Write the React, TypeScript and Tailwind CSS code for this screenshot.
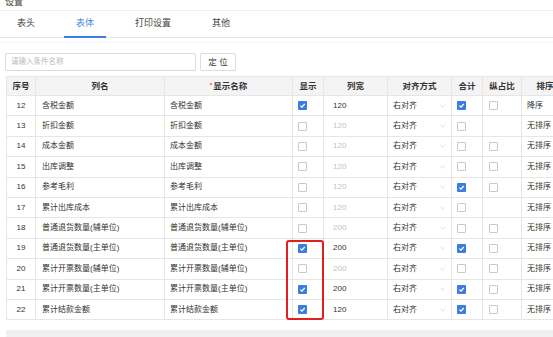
import React from "react";

type Row = {
  no: number;
  name: string;
  show: boolean;
  width: number;
  sum: boolean;
  ratio: boolean | null;
  sort: string;
};

const rows: Row[] = [
  { no: 12, name: "含税金额", show: true, width: 120, sum: true, ratio: false, sort: "降序" },
  { no: 13, name: "折扣金额", show: false, width: 120, sum: false, ratio: null, sort: "无排序" },
  { no: 14, name: "成本金额", show: false, width: 120, sum: false, ratio: false, sort: "无排序" },
  { no: 15, name: "出库调整", show: false, width: 120, sum: false, ratio: false, sort: "无排序" },
  { no: 16, name: "参考毛利", show: false, width: 120, sum: true, ratio: false, sort: "无排序" },
  { no: 17, name: "累计出库成本", show: false, width: 120, sum: false, ratio: null, sort: "无排序" },
  { no: 18, name: "普通退货数量(辅单位)", show: false, width: 200, sum: false, ratio: false, sort: "无排序" },
  { no: 19, name: "普通退货数量(主单位)", show: true, width: 200, sum: true, ratio: false, sort: "无排序" },
  { no: 20, name: "累计开票数量(辅单位)", show: false, width: 200, sum: false, ratio: false, sort: "无排序" },
  { no: 21, name: "累计开票数量(主单位)", show: true, width: 200, sum: true, ratio: false, sort: "无排序" },
  { no: 22, name: "累计结款金额", show: true, width: 120, sum: true, ratio: false, sort: "无排序" },
];

const cols = "grid grid-cols-[29px_129px_128px_31px_64px_64px_31px_39px_47px_60px]";
const cell = "border-r border-b border-[#e6e6e6] flex items-center overflow-hidden whitespace-nowrap";

function Checkbox({ checked }: { checked: boolean }) {
  if (checked) {
    return (
      <span className="w-[9px] h-[9px] rounded-[1px] bg-[#3b7de0] flex items-center justify-center">
        <svg width="7" height="7" viewBox="0 0 10 10">
          <path d="M2 5.2 L4.2 7.3 L8.2 2.8" fill="none" stroke="#fff" strokeWidth="1.8" />
        </svg>
      </span>
    );
  }
  return <span className="w-[9px] h-[9px] rounded-[1px] border border-[#c9c9c9] bg-white" />;
}

export default function App() {
  return (
    <div className="w-[553px] h-[337px] overflow-hidden bg-white text-[#333] font-['Liberation_Sans','Noto_Sans_CJK_SC',sans-serif]">
      <div className="h-[13px] border-b border-[#eeeeee] pl-[5px]">
        <div className="text-[9px] leading-[9px] -mt-[2px] text-[#444]">设置</div>
      </div>

      <div className="h-[27px] border-b border-[#e6e6e6] flex pl-[5px] gap-[17px] text-[9px]">
        <div className="px-[12px] flex items-center text-[#444]">表头</div>
        <div className="relative px-[12px] flex items-center text-[#4a88e0]">
          表体
          <span className="absolute left-0 right-0 -bottom-[1px] h-[2px] bg-[#3b7de0]" />
        </div>
        <div className="px-[12px] flex items-center text-[#444]">打印设置</div>
        <div className="px-[12px] flex items-center text-[#444]">其他</div>
      </div>

      <div className="h-[5px] border-b border-[#f6f6f6]" />

      <div className="flex mt-[10px] pl-[5px] gap-[4px]">
        <div className="w-[191px] h-[18px] border border-[#dcdcdc] rounded-[2px] flex items-center pl-[5px] text-[7.5px] text-[#bbbbbb]">
          请输入条件名称
        </div>
        <div className="w-[36px] h-[18px] border border-[#dcdcdc] rounded-[2px] flex items-center justify-center text-[8.5px] text-[#333]">
          定 位
        </div>
      </div>

      <div className="relative mt-[5px] ml-[6px] border-l border-t border-[#e6e6e6] text-[8px]">
        <div className={`${cols} h-[19px] bg-[#f4f4f4] font-bold text-[8.5px] text-[#333]`}>
          <div className={`${cell} justify-center`}>序号</div>
          <div className={`${cell} justify-center`}>列名</div>
          <div className={`${cell} justify-center`}>
            <span className="text-[#e04040] text-[6px] self-start mt-[4px] mr-[1px]">*</span>显示名称
          </div>
          <div className={`${cell} justify-center`}>显示</div>
          <div className={`${cell} justify-center`}>列宽</div>
          <div className={`${cell} justify-center`}>对齐方式</div>
          <div className={`${cell} justify-center`}>合计</div>
          <div className={`${cell} justify-center`}>纵占比</div>
          <div className={`${cell} justify-center`}>排序</div>
          <div className={`${cell} justify-center`}></div>
        </div>

        {rows.map((r) => (
          <div key={r.no} className={`${cols} h-[20.4px]`}>
            <div className={`${cell} justify-center`}>{r.no}</div>
            <div className={`${cell} pl-[6px]`}>{r.name}</div>
            <div className={`${cell} pl-[5px]`}>{r.name}</div>
            <div className={`${cell} pl-[5px]`}>
              <Checkbox checked={r.show} />
            </div>
            <div className={`${cell} pl-[9px] ${r.show ? "text-[#333]" : "text-[#c2c2c2]"}`}>{r.width}</div>
            <div className={`${cell} pl-[5px] pr-[6px] justify-between`}>
              <span>右对齐</span>
              <svg width="5" height="4" viewBox="0 0 6 4">
                <path d="M0.5 0.8 L3 3.2 L5.5 0.8" fill="none" stroke="#cfcfcf" strokeWidth="0.9" />
              </svg>
            </div>
            <div className={`${cell} pl-[5px]`}>
              <Checkbox checked={r.sum} />
            </div>
            <div className={`${cell} pl-[6px]`}>{r.ratio !== null && <Checkbox checked={r.ratio} />}</div>
            <div className={`${cell} pl-[5px]`}>{r.sort}</div>
            <div className={cell}></div>
          </div>
        ))}

        <div className="absolute left-[279px] top-[163px] w-[38px] h-[80px] border-2 border-[#e02020] rounded-[3px]" />
      </div>

      <div className="mt-[10px] ml-[6px] h-[8px] bg-[#f0f0f0]" />
    </div>
  );
}
